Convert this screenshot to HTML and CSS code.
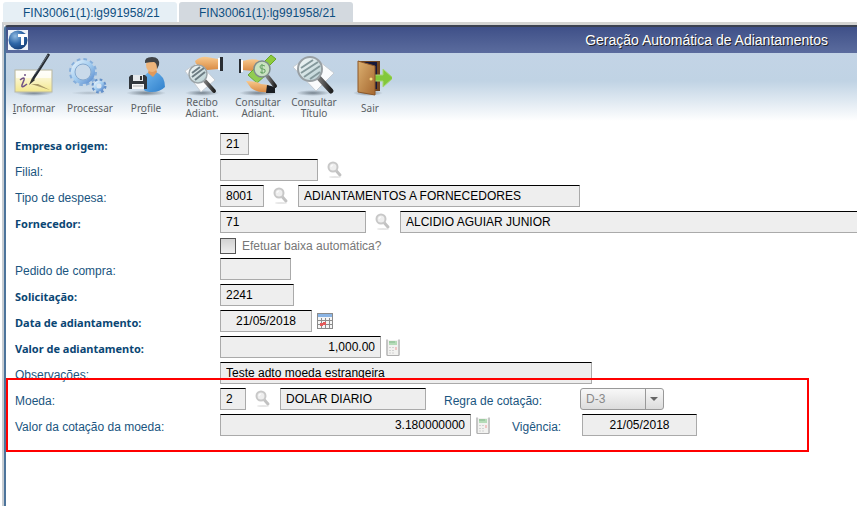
FILE: index.html
```html
<!DOCTYPE html>
<html lang="pt-BR">
<head>
<meta charset="utf-8">
<title>Geração Automática de Adiantamentos</title>
<link rel="stylesheet" href="styles.css">
</head>
<body>
<svg class="defs" aria-hidden="true">
  <defs>
    <linearGradient id="gHandle" x1="0" y1="0" x2="1" y2="0"><stop offset="0" stop-color="#777"/><stop offset="1" stop-color="#222"/></linearGradient>
    <linearGradient id="gGear" x1="0" y1="0" x2="1" y2="1"><stop offset="0" stop-color="#e0effb"/><stop offset=".5" stop-color="#a3cdf0"/><stop offset="1" stop-color="#5f8fd0"/></linearGradient>
    <linearGradient id="gPaper" x1="0" y1="0" x2="0" y2="1"><stop offset="0" stop-color="#fffef6"/><stop offset="1" stop-color="#f3e78c"/></linearGradient>
    <linearGradient id="gDoor" x1="0" y1="0" x2="1" y2="1"><stop offset="0" stop-color="#dcb070"/><stop offset="1" stop-color="#a5672f"/></linearGradient>
    <linearGradient id="gSkin" x1="0" y1="0" x2="0" y2="1"><stop offset="0" stop-color="#f9c98c"/><stop offset="1" stop-color="#d98b45"/></linearGradient>
    <linearGradient id="gBody" x1="0" y1="0" x2="1" y2="1"><stop offset="0" stop-color="#6fb6ee"/><stop offset="1" stop-color="#2f7fcb"/></linearGradient>
    <linearGradient id="gLens" x1="0" y1="0" x2="1" y2="1"><stop offset="0" stop-color="#f7fafa"/><stop offset="1" stop-color="#b4cdd0"/></linearGradient>
    <radialGradient id="gShadow"><stop offset="0" stop-color="#4d5a66" stop-opacity=".7"/><stop offset="1" stop-color="#4d5a66" stop-opacity="0"/></radialGradient>
    <radialGradient id="gGlobe" cx=".35" cy=".3" r=".8"><stop offset="0" stop-color="#8fb9e0"/><stop offset=".5" stop-color="#2f67a8"/><stop offset="1" stop-color="#123a72"/></radialGradient>
    <symbol id="search" viewBox="0 0 16 18">
      <ellipse cx="8" cy="16" rx="6" ry="1" fill="#e6e6e6"/>
      <path d="M9 9.500l4 4.500" stroke="#c2c2c2" stroke-width="3" stroke-linecap="round"/>
      <circle cx="6" cy="6" r="4.500" fill="#eee" stroke="#c8c8c8" stroke-width="2"/>
      <path d="M4 6q0-2 2-2" stroke="#fff" fill="none"/>
    </symbol>
    <symbol id="calc" viewBox="0 0 14 17">
      <path d="M1 .5v16M13 .5v16" stroke="#8c8c8c"/>
      <path d="M1 16.500h12" stroke="#b0b0b0"/>
      <rect x="2" y="1" width="10" height="15" fill="#f2f2f0"/>
      <rect x="3" y="2" width="8" height="4" fill="#b5dcb8"/>
      <path d="M3 3h6" stroke="#86b88d"/>
      <path d="M3 8.500h5M3 11.500h5M3 14h5" stroke="#d2d2d2" stroke-dasharray="2 1"/>
      <path d="M10 8v3" stroke="#e99" stroke-width="1"/>
    </symbol>
  </defs>
</svg>

<nav class="tabs">
  <a class="tab tab-active" href="#">FIN30061(1):lg991958/21</a>
  <a class="tab" href="#">FIN30061(1):lg991958/21</a>
</nav>

<main class="window">
  <header class="titlebar">
    <svg class="logo" viewBox="0 0 20 20">
      <rect width="20" height="20" fill="#edf2f8"/>
      <circle cx="10" cy="10" r="9.500" fill="url(#gGlobe)"/>
      <path d="M10 4h9v3h-3v8h-3V7h-3z" fill="#fff"/>
    </svg>
    <h1>Geração Automática de Adiantamentos</h1>
  </header>

  <div class="toolbar">
    <button class="tool" type="button">
      <svg viewBox="0 0 44 44">
        <ellipse cx="22" cy="40" rx="19" ry="3" fill="url(#gShadow)"/>
        <rect x="3" y="17" width="37" height="22" fill="url(#gPaper)" stroke="#b9b8a4"/>
        <path d="M4 18h35v7H4z" fill="#fff" opacity=".7"/>
        <path d="M8 27q5-4 4 0l-2 5q-1 4 5-1" fill="none" stroke="#705286" stroke-width="1.500"/>
        <circle cx="13" cy="22" r="1" fill="#705286"/>
        <path d="M19 31l19 6-12-6z" fill="#a89866"/>
        <path d="M17 32l3-7 3 2z" fill="#333"/>
        <path d="M21 26Q29 14 37 1" stroke="#252a30" stroke-width="2.500" fill="none"/>
        <path d="M23 21L36 2" stroke="#7e8a95" stroke-width=".7"/>
      </svg>
      <span><u>I</u>nformar</span>
    </button>
    <button class="tool" type="button">
      <svg viewBox="0 0 44 44">
        <ellipse cx="21" cy="40" rx="18" ry="2" fill="url(#gShadow)" opacity=".4"/>
        <circle cx="15" cy="19" r="12.500" fill="none" stroke="#85aedb" stroke-width="3" stroke-dasharray="3.500 3.050"/>
        <circle cx="15" cy="19" r="10" fill="none" stroke="url(#gGear)" stroke-width="4"/>
        <circle cx="15" cy="19" r="8" fill="#c9daea" stroke="#85a9cf"/>
        <circle cx="31" cy="33" r="6" fill="none" stroke="#6490c8" stroke-width="3" stroke-dasharray="2.500 2.200"/>
        <circle cx="31" cy="33" r="4" fill="#dbe6f1" stroke="url(#gGear)" stroke-width="3"/>
      </svg>
      <span>Processar</span>
    </button>
    <button class="tool" type="button">
      <svg viewBox="0 0 44 44">
        <ellipse cx="22" cy="40" rx="20" ry="3" fill="url(#gShadow)"/>
        <path d="M20 37Q18 22 25 19h7q9 4 9 15-5 5-13 5-6 0-8-2z" fill="url(#gBody)"/>
        <path d="M24 20l5 4 4-5-1-3h-7z" fill="#e0995b"/>
        <ellipse cx="28" cy="12" rx="6" ry="7" fill="#eeb57b"/>
        <path d="M21 10Q20 4 28 4q8 0 7 8l-2 4q0-6-3-7-4 0-9 1z" fill="#414447"/>
        <path d="M7 22h14l2 2v12H5V24z" fill="#30363c"/>
        <path d="M9 22h10v6H9z" fill="#e5e9ec"/><path d="M16 23h2v4h-2z" fill="#333"/>
        <path d="M8 31h12v5H8z" fill="#f5f6f7"/><path d="M9 33h10" stroke="#aaa"/>
      </svg>
      <span>Pr<u>o</u>file</span>
    </button>
    <button class="tool" type="button">
      <svg viewBox="0 0 44 44">
        <ellipse cx="22" cy="40" rx="17" ry="3" fill="url(#gShadow)"/>
        <path d="M5 18l13-9 17 18-14 12z" fill="#fafbfc" stroke="#c5ccd3"/>
        <path d="M15 8q6-5 12-4l11 2v10l-11 1q-3-3-6-4-5 0-6-5z" fill="url(#gSkin)"/>
        <path d="M38 5h2v12h-2z" fill="#fff"/><path d="M40 4h3v14h-3z" fill="#292d33"/>
        <path d="M25 28l9 10" stroke="url(#gHandle)" stroke-width="4" stroke-linecap="round"/>
        <circle cx="18" cy="21" r="9" fill="url(#gLens)" stroke="#9ba4a8" stroke-width="1.500"/>
        <path d="M12 20l8-6M12 24l12-9M15 27l10-8" stroke="#6d7c83" stroke-width="2"/>
      </svg>
      <span>Recibo<br>Adiant.</span>
    </button>
    <button class="tool" type="button">
      <svg viewBox="0 0 44 44">
        <ellipse cx="22" cy="40" rx="19" ry="3" fill="url(#gShadow)"/>
        <path d="M3 6h2v14H3z" fill="#292d33"/><path d="M5 7h2v12H5z" fill="#fff"/>
        <path d="M7 8q8-3 15-1l7 3-2 5-10 3-10-1z" fill="url(#gSkin)"/>
        <path d="M28 9l7-7 5 4-7 7z" fill="#8ecb3d" stroke="#68a526"/>
        <path d="M12 22l9-9 9 9-9 8z" fill="#91cc50" stroke="#69a733"/>
        <path d="M10 28q10 0 15 3l8 1v7q-12 1-18-4z" fill="url(#gSkin)"/>
        <path d="M31 32l8 2v6h-9z" fill="#1b1e23"/>
        <path d="M32 24l7 9" stroke="url(#gHandle)" stroke-width="4" stroke-linecap="round"/>
        <circle cx="26" cy="16" r="8" fill="#c9e2c1" stroke="#7e8c8c" stroke-width="1.500"/>
        <path d="M29 13q-5-2-5 1 0 2 3 2t2 3q-1 2-5 0M26 11v10" fill="none" stroke="#67a266"/>
      </svg>
      <span>Consultar<br>Adiant.</span>
    </button>
    <button class="tool" type="button">
      <svg viewBox="0 0 44 44">
        <ellipse cx="21" cy="40" rx="17" ry="3" fill="url(#gShadow)"/>
        <path d="M1 14L14 5h9l19 15-18 18z" fill="#fafbfc" stroke="#c5ccd3"/>
        <path d="M27 25l12 13" stroke="url(#gHandle)" stroke-width="5" stroke-linecap="round"/>
        <circle cx="18" cy="16" r="12" fill="url(#gLens)" stroke="#989fa3" stroke-width="2"/>
        <path d="M9 15l12-8M9 20L26 9M12 24l16-11M18 26l10-7" stroke="#84989b" stroke-width="2"/>
      </svg>
      <span>Consultar<br>Título</span>
    </button>
    <button class="tool" type="button">
      <svg viewBox="0 0 44 44">
        <ellipse cx="20" cy="40" rx="15" ry="3" fill="url(#gShadow)"/>
        <path d="M10 8h22v30H10z" fill="#704622"/><path d="M13 9h16v27H13z" fill="#16183a"/>
        <path d="M26 22h9v-6l10 9-10 9v-6h-9z" fill="#83c83b" stroke="#a7d777"/>
        <path d="M10 8l17 5v29l-17-3z" fill="url(#gDoor)" stroke="#8c5727"/>
        <circle cx="23" cy="26" r="1.500" fill="#f7df7d"/>
      </svg>
      <span>Sair</span>
    </button>
  </div>

  <form class="form">
    <div class="row">
      <label class="label required" for="empresa">Empresa origem:</label>
      <input class="field w-29" id="empresa" value="21" readonly>
    </div>
    <div class="row">
      <label class="label" for="filial">Filial:</label>
      <input class="field w-98" id="filial" readonly>
      <button class="lookup" type="button" aria-label="Pesquisar"><svg><use href="#search"/></svg></button>
    </div>
    <div class="row">
      <label class="label" for="tipo">Tipo de despesa:</label>
      <input class="field w-44" id="tipo" value="8001" readonly>
      <button class="lookup" type="button" aria-label="Pesquisar"><svg><use href="#search"/></svg></button>
      <input class="field w-282" aria-label="Descrição da despesa" value="ADIANTAMENTOS A FORNECEDORES" readonly>
    </div>
    <div class="row">
      <label class="label required" for="fornecedor">Fornecedor:</label>
      <input class="field w-146" id="fornecedor" value="71" readonly>
      <button class="lookup" type="button" aria-label="Pesquisar"><svg><use href="#search"/></svg></button>
      <input class="field fill" aria-label="Nome do fornecedor" value="ALCIDIO AGUIAR JUNIOR" readonly>
    </div>
    <div class="row check-row">
      <input class="check" type="checkbox" id="baixa" disabled>
      <label for="baixa">Efetuar baixa automática?</label>
    </div>
    <div class="row">
      <label class="label" for="pedido">Pedido de compra:</label>
      <input class="field w-71" id="pedido" readonly>
    </div>
    <div class="row">
      <label class="label required" for="solicitacao">Solicitação:</label>
      <input class="field w-74" id="solicitacao" value="2241" readonly>
    </div>
    <div class="row">
      <label class="label required" for="data">Data de adiantamento:</label>
      <input class="field center w-92" id="data" value="21/05/2018" readonly>
      <button class="mini" type="button" aria-label="Calendário">
        <svg class="calendar" viewBox="0 0 16 16">
          <rect x=".5" y=".5" width="15" height="15" fill="#f5f5f5" stroke="#8b8b8b"/>
          <path d="M1 1h14v3H1z" fill="#8ab4e4"/>
          <path d="M1 7.500h14M1 11.500h14M4.500 5v10M8.500 5v10M12.500 5v10" stroke="#8c8c8c"/>
          <path d="M3 10h3v3H3zM6 9h3v3H6z" fill="#e35b5b"/>
        </svg>
      </button>
    </div>
    <div class="row">
      <label class="label required" for="valor">Valor de adiantamento:</label>
      <input class="field right w-161" id="valor" value="1,000.00" readonly>
      <button class="mini" type="button" aria-label="Calculadora"><svg class="calc"><use href="#calc"/></svg></button>
    </div>
    <div class="row">
      <label class="label" for="obs">Observações:</label>
      <input class="field w-372" id="obs" value="Teste adto moeda estrangeira" readonly>
    </div>
    <div class="highlighted">
      <div class="row">
        <label class="label" for="moeda">Moeda:</label>
        <input class="field w-26" id="moeda" value="2" readonly>
        <button class="lookup" type="button" aria-label="Pesquisar"><svg><use href="#search"/></svg></button>
        <input class="field w-146" aria-label="Nome da moeda" value="DOLAR DIARIO" readonly>
        <label class="label label-rule" for="regra">Regra de cotação:</label>
        <span class="select">
          <select id="regra" disabled><option>D-3</option></select>
          <svg viewBox="0 0 18 20"><path d="M.5 0v20" stroke="#999"/><path d="M5 8h8l-4 4z" fill="#666"/></svg>
        </span>
      </div>
      <div class="row">
        <label class="label" for="cotacao">Valor da cotação da moeda:</label>
        <input class="field right w-251" id="cotacao" value="3.180000000" readonly>
        <button class="mini" type="button" aria-label="Calculadora"><svg class="calc"><use href="#calc"/></svg></button>
        <label class="label label-date" for="vigencia">Vigência:</label>
        <input class="field center w-115" id="vigencia" value="21/05/2018" readonly>
      </div>
      <div class="marker"></div>
    </div>
  </form>
</main>
</body>
</html>
```
FILE: styles.css
```css
* { box-sizing: border-box; }

body {
  margin: 0;
  min-height: 100vh;
  display: flex;
  flex-direction: column;
  background: #fff;
  font: 12px/16px "Liberation Sans", Arial, sans-serif;
  color: #000;
  overflow: hidden;
}

button, input, select { font: inherit; margin: 0; }

.defs { position: absolute; width: 0; height: 0; }

.tabs {
  display: flex;
  gap: 2px;
  padding: 2px 0 0 3px;
}

.tab {
  padding: 3px 20px 2px;
  width: 174px;
  height: 20px;
  border-radius: 3px 3px 0 0;
  background: #d3d9df;
  color: #0d4e80;
  text-decoration: none;
  white-space: nowrap;
}

.tab-active { background: #e6eff5; }

.window {
  flex: 1;
  display: flex;
  flex-direction: column;
  margin-left: 2px;
  border-top: 3px solid #d4d4d2;
  border-left: 2px solid #c9ced3;
}

.titlebar {
  display: flex;
  align-items: center;
  justify-content: space-between;
  height: 28px;
  padding: 0 29px 0 2px;
  border-top: 2px solid #3c4250;
  border-left: 2px solid #4c749b;
  border-top-left-radius: 4px;
  background: linear-gradient(#3f5088, #5b6c9e);
}

.logo { width: 20px; height: 20px; }

.titlebar h1 {
  margin: 0;
  font-size: 14px;
  font-weight: 400;
  color: #fff;
  text-shadow: 1px 1px 0 #222;
}

.toolbar {
  display: flex;
  height: 72px;
  border-left: 2px solid #4c749b;
  background: linear-gradient(#c3d4e6 0, #c0d3e4 28px, #fff 68px);
}

.tool {
  display: flex;
  flex-direction: column;
  align-items: center;
  justify-content: flex-start;
  width: 56px;
  padding: 0;
  border: 0;
  background: none;
  font: 10px/11px "Noto Sans", sans-serif;
  color: #5a5f64;
}

.tool svg { width: 44px; height: 44px; }

.tool span {
  display: flow-root;
  height: 22px;
  align-content: center;
  white-space: nowrap;
}

.form {
  flex: 1;
  display: flex;
  flex-direction: column;
  gap: 4px;
  padding: 8px 0 0 9px;
  border-left: 2px solid #4c749b;
}

.row {
  display: flex;
  height: 22px;
}

.label {
  flex: none;
  width: 205px;
  padding-top: 5px;
  color: #1a5580;
}

.required {
  font: bold 11px/16px "Noto Sans", sans-serif;
  color: #0a4674;
}

.field {
  flex: none;
  height: 22px;
  padding: 0 5px;
  border: 1px solid #aaa;
  border-top: 1px solid #000;
  border-radius: 0;
  background: #eee;
  color: #000;
  outline: 0;
}

.center { text-align: center; }
.right { text-align: right; }
.fill { flex: 1; min-width: 0; border-right: 0; }

.w-26 { width: 26px; }
.w-29 { width: 29px; }
.w-44 { width: 44px; }
.w-71 { width: 71px; }
.w-74 { width: 74px; }
.w-92 { width: 92px; }
.w-98 { width: 98px; }
.w-115 { width: 115px; }
.w-146 { width: 146px; }
.w-161 { width: 161px; }
.w-251 { width: 251px; }
.w-282 { width: 282px; }
.w-372 { width: 372px; }

.lookup, .mini {
  display: flex;
  align-items: center;
  flex: none;
  padding: 0;
  border: 0;
  background: none;
}

.lookup { width: 34px; justify-content: center; }
.lookup svg { width: 16px; height: 18px; }
.mini { width: 25px; padding-left: 5px; }
.calendar { width: 16px; height: 16px; }
.calc { width: 14px; height: 17px; }

.check-row {
  align-items: center;
  gap: 6px;
  height: 17px;
  padding-left: 205px;
  color: #777;
}

.check {
  appearance: none;
  width: 16px;
  height: 16px;
  border: 1px solid #555;
  background: linear-gradient(#d2d2d2, #eee);
}

.highlighted {
  position: relative;
  display: flex;
  flex-direction: column;
  gap: 4px;
}

.marker {
  position: absolute;
  inset: -10px 48px -16px -9px;
  border: 2px solid #f00;
  pointer-events: none;
}

.label-rule { width: 154px; padding-left: 18px; }
.label-date { width: 86px; padding-left: 16px; }

.select {
  position: relative;
  width: 84px;
  height: 22px;
}

.select select {
  appearance: none;
  width: 100%;
  height: 100%;
  padding: 0 5px;
  border: 1px solid #999;
  border-radius: 3px;
  background: linear-gradient(#f8f8f8, #dcdcdc);
  color: #888;
  opacity: 1;
}

.select svg {
  position: absolute;
  top: 1px;
  right: 1px;
  width: 18px;
  height: 20px;
  pointer-events: none;
}
```
